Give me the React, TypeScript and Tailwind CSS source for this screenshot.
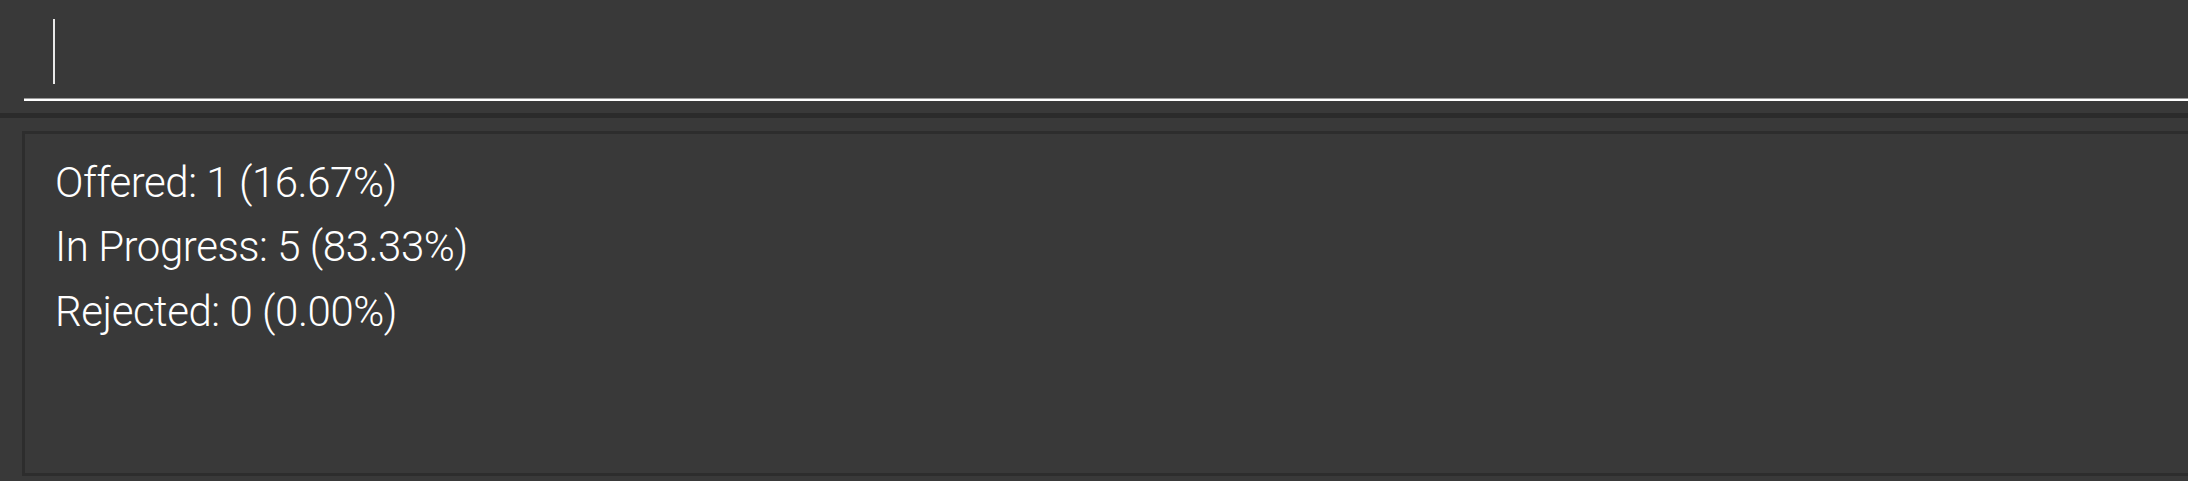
export default function App() {
  const lines = ["Offered: 1 (16.67%)", "In Progress: 5 (83.33%)", "Rejected: 0 (0.00%)"];
  return (
    <div className="w-[2188px] h-[481px] bg-[#393939] overflow-hidden flex flex-col">
      <div className="h-[113px] pt-[19px] pl-[24px] shrink-0">
        <div className="flex flex-col">
          <div className="pl-[29px] h-[79px]">
            <div className="w-[2px] h-[65px] bg-[#e8e8e8]" />
          </div>
          <div className="h-px bg-[#9a9a9a]" />
          <div className="h-[2px] bg-white" />
        </div>
      </div>
      <div className="h-[5px] bg-[#2b2b2b] shrink-0" />
      <div className="h-[13px] shrink-0" />
      <div className="ml-[22px] h-[345px] border-l-[3px] border-t-[3px] border-b-[3px] border-[#2d2d2d] bg-[#393939] pl-[30px] pt-[17px] shrink-0">
        {lines.map((l) => (
          <div
            key={l}
            className="text-[42px] leading-[64.4px] font-light tracking-[-0.45px] text-white whitespace-nowrap"
            style={{ fontFamily: '"Roboto", "Noto Sans", sans-serif' }}
          >
            {l}
          </div>
        ))}
      </div>
    </div>
  );
}
